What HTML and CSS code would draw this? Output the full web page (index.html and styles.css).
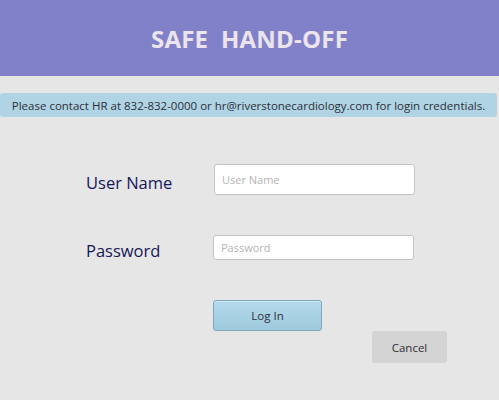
FILE: index.html
```html
<!DOCTYPE html>
<html>
<head>
<meta charset="utf-8">
<link rel="stylesheet" href="styles.css">
</head>
<body>
<header class="header"><h1 class="title">SAFE&nbsp; HAND-OFF</h1></header>
<div class="notice">Please contact HR at 832-832-0000 or hr@riverstonecardiology.com for login credentials.</div>
<form class="form">
  <div class="row row-user">
    <label class="label">User Name</label>
    <input class="input input-user" type="text" placeholder="User Name">
  </div>
  <div class="row row-pass">
    <label class="label">Password</label>
    <input class="input input-pass" type="password" placeholder="Password">
  </div>
  <div class="actions">
    <button type="button" class="btn btn-login">Log In</button>
    <button type="button" class="btn btn-cancel">Cancel</button>
  </div>
</form>
</body>
</html>
```
FILE: styles.css
```css
html, body { margin: 0; padding: 0; }
body {
  width: 499px;
  height: 400px;
  background: #e6e6e6;
  font-family: "Open Sans", "Noto Sans", sans-serif;
  overflow: hidden;
}
.header {
  height: 76px;
  background: #8181c9;
  display: flex;
  align-items: center;
  justify-content: center;
}
.title {
  margin: 0;
  font-size: 24px;
  font-weight: 700;
  color: #ece4ec;
  letter-spacing: 0.2px;
}
.notice {
  margin-top: 17px;
  width: 497px;
  height: 24px;
  box-sizing: border-box;
  background: #b0d4e3;
  border-radius: 3px;
  font-size: 11.5px;
  color: #2e2e3a;
  display: flex;
  align-items: center;
  justify-content: center;
  white-space: nowrap;
}
.form { padding-left: 86px; }
.row {
  display: flex;
  align-items: center;
}
.label {
  width: 127px;
  font-size: 16.5px;
  color: #16165a;
  position: relative;
  top: 3px;
}
.row-user { margin-top: 47px; }
.row-pass { margin-top: 40px; }
.input {
  box-sizing: border-box;
  width: 201px;
  background: #fff;
  border: 1px solid #c4c4c4;
  border-radius: 3px;
  font-family: inherit;
  font-size: 11px;
  padding: 0 7px;
  color: #333;
}
.input::placeholder { color: #b4b4b4; }
.input-user { height: 31px; margin-left: 1px; }
.input-pass { height: 25px; }
.actions {
  padding-left: 127px;
  margin-top: 40px;
  height: 64px;
}
.btn {
  font-family: inherit;
  font-size: 11.5px;
  color: #2e2e3a;
  border-radius: 3px;
  cursor: pointer;
}
.btn-login {
  width: 109px;
  height: 31px;
  background: linear-gradient(#b3daec, #9ecadd);
  border: 1px solid #7fa7ba;
  box-shadow: inset 0 1px 0 rgba(255,255,255,0.4);
}
.btn-cancel {
  display: block;
  margin-left: 159px;
  width: 75px;
  height: 32px;
  background: #d4d4d4;
  border: none;
}
```
